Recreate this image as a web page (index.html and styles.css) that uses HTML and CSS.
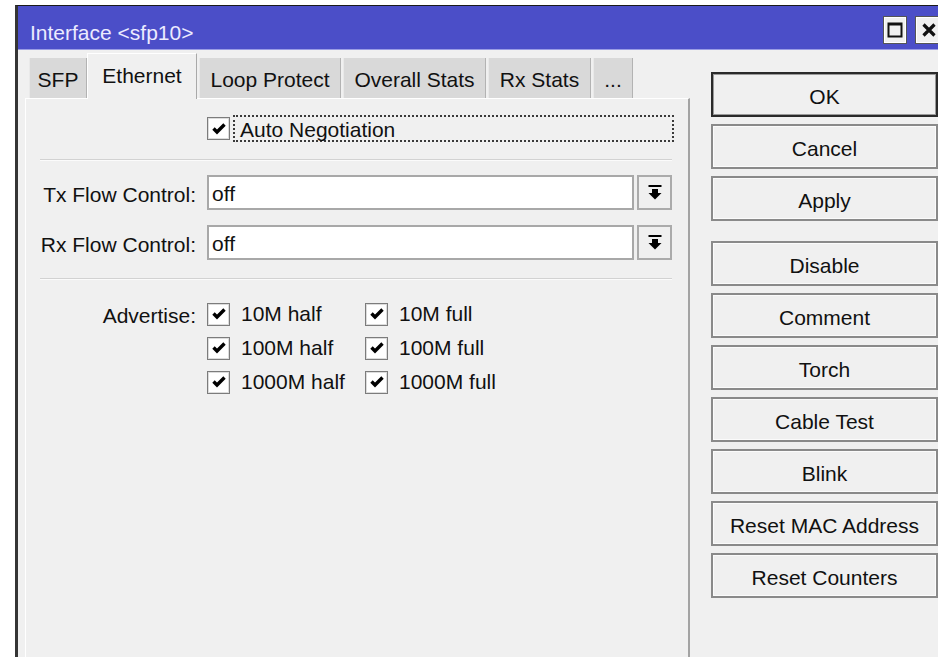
FILE: index.html
```html
<!DOCTYPE html>
<html lang="en">
<head>
<meta charset="utf-8">
<title>Interface &lt;sfp10&gt;</title>
<link rel="stylesheet" href="styles.css">
</head>
<body>
<div class="window">
  <div class="titlebar">
    <span class="title">Interface &lt;sfp10&gt;</span>
    <div class="tb-buttons">
      <span class="tb-btn">
        <svg width="16" height="16" viewBox="0 0 16 16"><rect x="1.5" y="1.5" width="13" height="13" fill="none" stroke="#111" stroke-width="2"/><rect x="1" y="1" width="14" height="2.5" fill="#111"/></svg>
      </span>
      <span class="tb-btn close">
        <svg width="16" height="16" viewBox="0 0 16 16"><path d="M2.5 2.5 L13.5 13.5 M13.5 2.5 L2.5 13.5" stroke="#111" stroke-width="3.2"/></svg>
      </span>
    </div>
  </div>

  <div class="client">
    <div class="left">
      <div class="tabs">
        <span class="tab w-sfp">SFP</span>
        <span class="tab active w-eth">Ethernet</span>
        <span class="tab w-loop">Loop Protect</span>
        <span class="tab w-overall">Overall Stats</span>
        <span class="tab w-rx">Rx Stats</span>
        <span class="tab w-more">...</span>
      </div>

      <div class="panel">
        <div class="auto-row">
          <span class="cb"><svg width="14" height="12" viewBox="0 0 14 12"><path d="M1.5 5.5 L5 9 L12.5 1.5" fill="none" stroke="#000" stroke-width="3.4"/></svg></span>
          <span class="focus-label">Auto Negotiation</span>
        </div>

        <div class="sep sep-1"></div>

        <div class="field-row tx">
          <span class="label">Tx Flow Control:</span>
          <span class="input">off</span>
          <span class="drop">
            <svg width="14" height="15" viewBox="0 0 14 15"><rect x="0.5" y="0" width="13" height="2" fill="#000"/><rect x="4" y="4" width="6" height="4" fill="#000"/><polygon points="0.5,8 13.5,8 7,14.5" fill="#000"/></svg>
          </span>
        </div>

        <div class="field-row rx">
          <span class="label">Rx Flow Control:</span>
          <span class="input">off</span>
          <span class="drop">
            <svg width="14" height="15" viewBox="0 0 14 15"><rect x="0.5" y="0" width="13" height="2" fill="#000"/><rect x="4" y="4" width="6" height="4" fill="#000"/><polygon points="0.5,8 13.5,8 7,14.5" fill="#000"/></svg>
          </span>
        </div>

        <div class="sep sep-2"></div>

        <div class="advertise">
          <span class="label">Advertise:</span>
          <div class="checks">
            <span class="check"><span class="cb"><svg width="14" height="12" viewBox="0 0 14 12"><path d="M1.5 5.5 L5 9 L12.5 1.5" fill="none" stroke="#000" stroke-width="3.4"/></svg></span>10M half</span>
            <span class="check"><span class="cb"><svg width="14" height="12" viewBox="0 0 14 12"><path d="M1.5 5.5 L5 9 L12.5 1.5" fill="none" stroke="#000" stroke-width="3.4"/></svg></span>10M full</span>
            <span class="check"><span class="cb"><svg width="14" height="12" viewBox="0 0 14 12"><path d="M1.5 5.5 L5 9 L12.5 1.5" fill="none" stroke="#000" stroke-width="3.4"/></svg></span>100M half</span>
            <span class="check"><span class="cb"><svg width="14" height="12" viewBox="0 0 14 12"><path d="M1.5 5.5 L5 9 L12.5 1.5" fill="none" stroke="#000" stroke-width="3.4"/></svg></span>100M full</span>
            <span class="check"><span class="cb"><svg width="14" height="12" viewBox="0 0 14 12"><path d="M1.5 5.5 L5 9 L12.5 1.5" fill="none" stroke="#000" stroke-width="3.4"/></svg></span>1000M half</span>
            <span class="check"><span class="cb"><svg width="14" height="12" viewBox="0 0 14 12"><path d="M1.5 5.5 L5 9 L12.5 1.5" fill="none" stroke="#000" stroke-width="3.4"/></svg></span>1000M full</span>
          </div>
        </div>
      </div>
    </div>

    <div class="actions">
      <span class="btn default">OK</span>
      <span class="btn">Cancel</span>
      <span class="btn">Apply</span>
      <span class="btn group-start">Disable</span>
      <span class="btn">Comment</span>
      <span class="btn">Torch</span>
      <span class="btn">Cable Test</span>
      <span class="btn">Blink</span>
      <span class="btn">Reset MAC Address</span>
      <span class="btn">Reset Counters</span>
    </div>
  </div>
</div>
</body>
</html>
```

FILE: styles.css
```css
html, body {
  margin: 0;
  height: 657px;
  overflow: hidden;
  background: #ffffff;
}

body {
  font-family: "Liberation Sans", Arial, sans-serif;
  font-size: 21px;
  color: #111;
}

/* window frame */
.window {
  margin: 5px 0 0 15px;
  width: 923px;
  height: 652px;
  border-left: 3px solid #353535;
  border-top: 1px solid #1a1a1a;
  background: #f0f0f0;
  display: flex;
  flex-direction: column;
}

.titlebar {
  height: 43px;
  flex: none;
  background: #4b4ec8;
  border-bottom: 1px solid #9a9ce4;
  display: flex;
  align-items: flex-start;
  justify-content: space-between;
}

.title {
  color: #ecebff;
  padding: 15px 0 0 12px;
  line-height: 24px;
}

.tb-buttons {
  display: flex;
  gap: 8px;
  padding-top: 10px;
  margin-right: -3px;
}

.tb-btn {
  width: 24px;
  height: 28px;
  box-sizing: border-box;
  background: #f0f0f0;
  border: 1px solid #555;
  box-shadow: inset 0 0 0 1px #fff;
  display: flex;
  align-items: center;
  justify-content: center;
}

.tb-btn.close {
  width: 29px;
  justify-content: flex-start;
  padding-left: 5px;
}

/* client area */
.client {
  flex: 1;
  display: flex;
  min-height: 0;
}

.left {
  width: 665px;
  padding-left: 7px;
  display: flex;
  flex-direction: column;
}

.tabs {
  display: flex;
  align-items: flex-end;
  height: 48px;
  padding-left: 4px;
}

.tab {
  height: 40px;
  box-sizing: border-box;
  background: #d9d9d9;
  border-left: 1px solid #e9e9e9;
  border-right: 1px solid #b3b3b3;
  display: flex;
  align-items: center;
  justify-content: center;
  margin-right: 2px;
  padding-top: 3px;
}

.tab.active {
  height: 46px;
  background: #f0f0f0;
  border-top: 1px solid #ffffff;
  border-left: 1px solid #ffffff;
  border-right: 1px solid #a9a9a9;
  margin-bottom: -1px;
  position: relative;
  z-index: 1;
  padding-top: 0;
  padding-bottom: 2px;
}

.w-sfp { width: 58px; margin-right: 0; }
.w-eth { width: 110px; }
.w-loop { width: 142px; }
.w-overall { width: 143px; }
.w-rx { width: 103px; }
.w-more { width: 40px; }

.panel {
  flex: 1;
  background: #f0f0f0;
  border-top: 1px solid #ffffff;
  border-left: 1px solid #ffffff;
  border-right: 2px solid #a3a3a3;
  padding: 16px 16px 0 14px;
}

/* checkbox */
.cb {
  width: 21px;
  height: 21px;
  flex: none;
  background: #ffffff;
  border: 1px solid #7c7c7c;
  box-shadow: inset 0 0 0 1px #dcdcdc;
  display: flex;
  align-items: center;
  justify-content: center;
}

.auto-row {
  display: flex;
  align-items: center;
  margin-left: 167px;
  margin-right: -2px;
  height: 27px;
}

.focus-label {
  flex: 1;
  height: 27px;
  box-sizing: border-box;
  margin-left: 3px;
  border: 2px dotted #3a3a3a;
  padding-left: 5px;
  line-height: 25px;
}

.sep {
  height: 0;
  border-top: 1px solid #d2d2d2;
  border-bottom: 1px solid #fbfbfb;
}

.sep-1 { margin-top: 17px; }
.sep-2 { margin-top: 18px; }

.field-row {
  display: flex;
  align-items: center;
  height: 35px;
}

.field-row.tx { margin-top: 14px; }
.field-row.rx { margin-top: 15px; }

.label {
  width: 156px;
  flex: none;
  text-align: right;
  white-space: nowrap;
}

.field-row .label {
  padding-top: 4px;
}

.input {
  width: 427px;
  height: 35px;
  box-sizing: border-box;
  margin-left: 11px;
  background: #ffffff;
  border: 2px solid #a8a8a8;
  padding: 3px 0 0 3px;
  line-height: 28px;
}

.drop {
  width: 35px;
  height: 35px;
  box-sizing: border-box;
  margin-left: 3px;
  background: #f0f0f0;
  border: 2px solid #ababab;
  display: flex;
  align-items: center;
  justify-content: center;
}

/* advertise block */
.advertise {
  display: flex;
  align-items: flex-start;
  margin-top: 17px;
}

.advertise .label {
  line-height: 34px;
  padding-top: 2px;
}

.checks {
  margin-left: 11px;
  display: grid;
  grid-template-columns: 158px auto;
  grid-auto-rows: 34px;
}

.check {
  display: flex;
  align-items: center;
  white-space: nowrap;
  line-height: 24px;
}

.check .cb {
  margin-right: 11px;
}

/* right-hand button column */
.actions {
  margin-left: 21px;
  padding-top: 22px;
  display: flex;
  flex-direction: column;
  gap: 7px;
}

.btn {
  width: 227px;
  height: 45px;
  box-sizing: border-box;
  flex: none;
  background: #f0f0f0;
  border: 2px solid #8a8a8a;
  box-shadow: inset 0 0 0 1px #fbfbfb;
  display: flex;
  align-items: center;
  justify-content: center;
  white-space: nowrap;
  padding-top: 4px;
}

.btn.default {
  border-color: #2a2a2a;
  box-shadow: inset 0 0 0 1px #9a9a9a;
}

.btn.group-start {
  margin-top: 13px;
}
```
